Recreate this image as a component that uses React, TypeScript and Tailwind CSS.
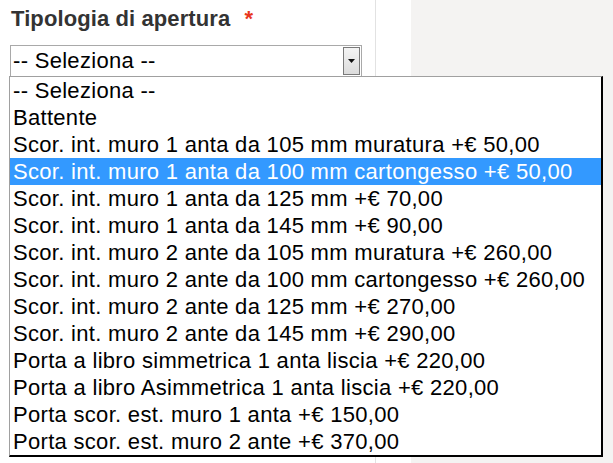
const options = [
  '-- Seleziona --',
  'Battente',
  'Scor. int. muro 1 anta da 105 mm muratura +€ 50,00',
  'Scor. int. muro 1 anta da 100 mm cartongesso +€ 50,00',
  'Scor. int. muro 1 anta da 125 mm +€ 70,00',
  'Scor. int. muro 1 anta da 145 mm +€ 90,00',
  'Scor. int. muro 2 ante da 105 mm muratura +€ 260,00',
  'Scor. int. muro 2 ante da 100 mm cartongesso +€ 260,00',
  'Scor. int. muro 2 ante da 125 mm +€ 270,00',
  'Scor. int. muro 2 ante da 145 mm +€ 290,00',
  'Porta a libro simmetrica 1 anta liscia +€ 220,00',
  'Porta a libro Asimmetrica 1 anta liscia +€ 220,00',
  'Porta scor. est. muro 1 anta +€ 150,00',
  'Porta scor. est. muro 2 ante +€ 370,00',
];

export default function App() {
  const selected = 3;

  return (
    <div className="relative flex h-[463px] w-[613px] overflow-hidden bg-white font-['Liberation_Sans',Arial,sans-serif]">
      <div className="w-[376px] shrink-0 border-r border-[#e2e2e2] pl-[10px] pt-[5px]">
        <div className="pl-[1px] text-[22px] font-bold leading-[28px] tracking-[0.1px] text-[#333]">
          Tipologia di apertura <span className="ml-[8px] text-[#e8361c]">*</span>
        </div>
        <div className="mt-[12px] flex h-[32px] w-[352px] items-center border border-[#a9a9a9] bg-white">
          <span className="flex-1 pl-[2px] text-[22px] leading-none tracking-[0.3px] text-black">-- Seleziona --</span>
          <div className="mr-[1px] flex h-[28px] w-[17px] items-center justify-center border border-[#7a7a7a] bg-gradient-to-b from-[#f4f4f4] to-[#dcdcdc]">
            <svg width="7" height="4" viewBox="0 0 7 4">
              <path d="M0 0h7L3.5 4z" fill="#111" />
            </svg>
          </div>
        </div>
      </div>
      <div className="w-[35px] shrink-0 bg-white" />
      <div className="flex-1 bg-[#f4f3f2]" />

      <div className="absolute left-[9px] top-[76px] w-[594px] border-l border-t border-[#a0a0a0] border-r-2 border-b-2 border-r-black border-b-black bg-white">
        {options.map((o, i) => (
          <div
            key={o}
            className={`h-[27px] whitespace-nowrap pl-[3px] text-[22px] leading-[27px] tracking-[0.3px] ${
              i === selected ? 'bg-[#3399ff] text-white' : 'text-black'
            }`}
          >
            {o}
          </div>
        ))}
      </div>
    </div>
  );
}
